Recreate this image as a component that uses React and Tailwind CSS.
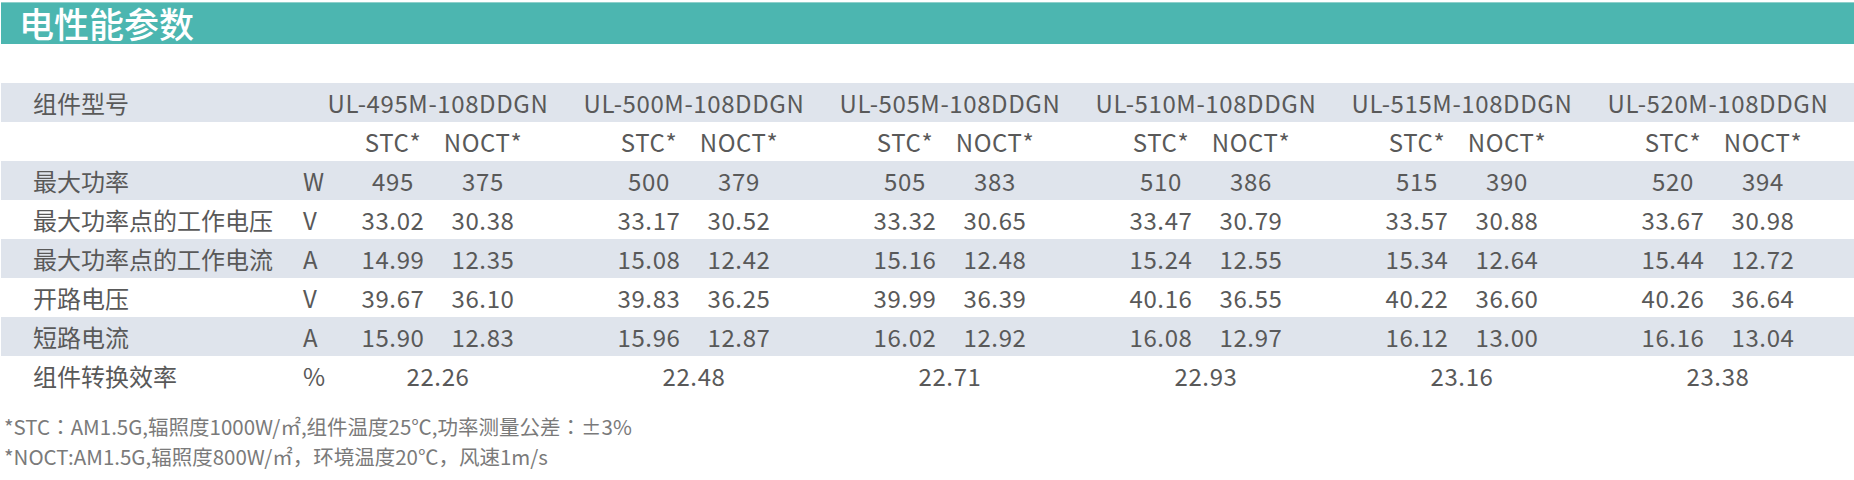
import React from "react";

const models = [
  "UL-495M-108DDGN",
  "UL-500M-108DDGN",
  "UL-505M-108DDGN",
  "UL-510M-108DDGN",
  "UL-515M-108DDGN",
  "UL-520M-108DDGN",
];

const rows = [
  {
    label: "最大功率",
    unit: "W",
    vals: [["495", "375"], ["500", "379"], ["505", "383"], ["510", "386"], ["515", "390"], ["520", "394"]],
  },
  {
    label: "最大功率点的工作电压",
    unit: "V",
    vals: [["33.02", "30.38"], ["33.17", "30.52"], ["33.32", "30.65"], ["33.47", "30.79"], ["33.57", "30.88"], ["33.67", "30.98"]],
  },
  {
    label: "最大功率点的工作电流",
    unit: "A",
    vals: [["14.99", "12.35"], ["15.08", "12.42"], ["15.16", "12.48"], ["15.24", "12.55"], ["15.34", "12.64"], ["15.44", "12.72"]],
  },
  {
    label: "开路电压",
    unit: "V",
    vals: [["39.67", "36.10"], ["39.83", "36.25"], ["39.99", "36.39"], ["40.16", "36.55"], ["40.22", "36.60"], ["40.26", "36.64"]],
  },
  {
    label: "短路电流",
    unit: "A",
    vals: [["15.90", "12.83"], ["15.96", "12.87"], ["16.02", "12.92"], ["16.08", "12.97"], ["16.12", "13.00"], ["16.16", "13.04"]],
  },
];

const efficiency = ["22.26", "22.48", "22.71", "22.93", "23.16", "23.38"];

function Row({ shaded, label, unit, children }) {
  return (
    <div className={`flex h-[39px] items-center ${shaded ? "bg-[#dfe4ec]" : ""}`}>
      <div className="w-[300px] shrink-0 pl-[32px] whitespace-nowrap">{label}</div>
      <div className="w-[9px] shrink-0 pl-[2px] whitespace-nowrap">{unit}</div>
      {children}
    </div>
  );
}

function Pair({ a, b }) {
  return (
    <div className="flex w-[256px] shrink-0 justify-center tracking-[0.6px]">
      <div className="w-[90px] text-center">{a}</div>
      <div className="w-[90px] text-center">{b}</div>
    </div>
  );
}

export default function App() {
  return (
    <div
      className="h-[480px] w-[1854px] overflow-hidden bg-white text-[24px] leading-none text-[#595959]"
      style={{ fontFamily: '"Noto Sans CJK SC", "Noto Sans", sans-serif' }}
    >
      {/* title bar */}
      <div className="mt-[2px] ml-[1px] h-[42px] border-t border-[#8fd0cb] bg-[#4cb6b0] pl-[18px] text-[35px] leading-[40px] font-medium text-white">
        电性能参数
      </div>

      {/* table */}
      <div className="mt-[39px] ml-[1px]">
        <Row shaded label="组件型号">
          {models.map((m) => (
            <div key={m} className="w-[256px] shrink-0 text-center tracking-[0.6px]">
              {m}
            </div>
          ))}
        </Row>
        <Row>
          {models.map((m) => (
            <Pair key={m} a="STC*" b="NOCT*" />
          ))}
        </Row>
        {rows.map((r, i) => (
          <Row key={r.label} shaded={i % 2 === 0} label={r.label} unit={r.unit}>
            {r.vals.map((v, j) => (
              <Pair key={j} a={v[0]} b={v[1]} />
            ))}
          </Row>
        ))}
        <Row label="组件转换效率" unit="%">
          {efficiency.map((e) => (
            <div key={e} className="w-[256px] shrink-0 text-center tracking-[0.6px]">
              {e}
            </div>
          ))}
        </Row>
      </div>

      {/* notes */}
      <div
        className="mt-[16px] pl-[4px] text-[20.5px] leading-[30px] text-[#7a7a7a]"
        style={{ fontFamily: '"Noto Sans CJK JP", "Noto Sans CJK SC", sans-serif' }}
      >
        <div>*STC：AM1.5G,辐照度1000W/㎡,组件温度25℃,功率测量公差：±3%</div>
        <div>*NOCT:AM1.5G,辐照度800W/㎡，环境温度20℃，风速1m/s</div>
      </div>
    </div>
  );
}
